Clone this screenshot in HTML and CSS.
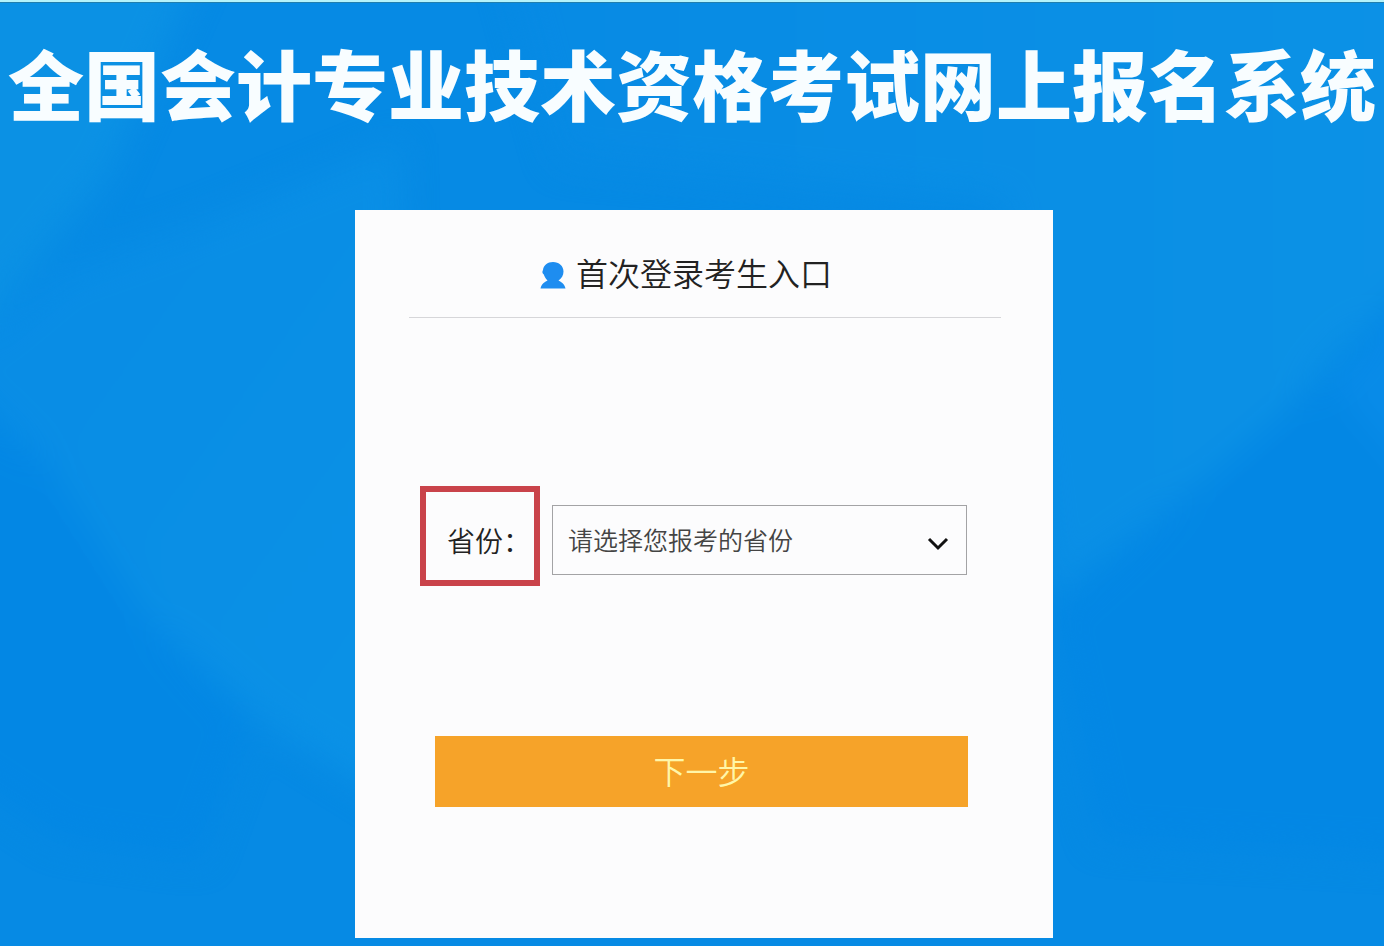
FILE: index.html
```
<!DOCTYPE html>
<html lang="zh-CN">
<head>
    <meta charset="UTF-8">
    <meta name="viewport" content="width=device-width, initial-scale=1.0">
    <title>全国会计专业技术资格考试网上报名系统</title>
    <link rel="stylesheet" href="styles.css">
</head>
<body>
    <svg class="page-bg" viewBox="0 0 1384 946" preserveAspectRatio="none" aria-hidden="true">
        <defs>
            <filter id="soften" color-interpolation-filters="sRGB"><feGaussianBlur stdDeviation="16"/></filter>
            <linearGradient id="mid" x1="0" y1="0" x2="1" y2="1">
                <stop offset="0" stop-color="#088be5"/>
                <stop offset="1" stop-color="#0b92e6"/>
            </linearGradient>
            <linearGradient id="top" x1="0" y1="0" x2="1" y2="0">
                <stop offset="0" stop-color="#078ae4"/>
                <stop offset="1" stop-color="#0c92e6"/>
            </linearGradient>
        </defs>
        <g filter="url(#soften)">
            <polygon fill="#0b91e4" points="-60,-60 210,-60 110,170 -60,380"/>
            <polygon fill="url(#mid)" points="-60,370 60,270 200,220 400,140 420,820 260,720 150,620 50,465 -60,370"/>
            <polygon fill="#0387e4" points="-60,380 50,465 150,620 250,720 200,860 60,840 -60,760"/>
            <polygon fill="url(#top)" points="500,-60 1450,-60 1450,250 1340,350 1300,395 1190,490 1050,600 1000,200 560,160"/>
            <polygon fill="#0387e4" points="1450,230 1340,360 1300,395 1190,490 1050,610 1100,840 1450,860"/>
            <polygon fill="#088be8" points="1330,380 1450,280 1450,520"/>
        </g>
    </svg>

    <header class="page-header">
        <h1>全国会计专业技术资格考试网上报名系统</h1>
    </header>

    <main class="page-main">
        <form class="login-card">
            <h2 class="card-title">
                <svg class="user-icon" viewBox="0 0 26 28" aria-hidden="true">
                    <path d="M13 1C19 1 23.500 5 23.500 10.500C23.500 14.500 21.500 17.500 18.500 19.500C20.500 21 24.500 22 25.500 27.500H0.500C1.500 22 5.500 21 7.500 19.500C5.500 17.500 4.500 15.500 3.800 13.500C2.200 12.500 2 10.500 3 9C3.500 4.500 7.500 1 13 1Z"/>
                </svg>
                首次登录考生入口
            </h2>

            <div class="form-row">
                <label class="province-label" for="province">省份：</label>
                <div class="select-wrap">
                    <select class="province-select" id="province">
                        <option>请选择您报考的省份</option>
                    </select>
                    <svg class="select-arrow" viewBox="0 0 22 14" aria-hidden="true">
                        <path d="M2 2L11 11L20 2"/>
                    </svg>
                </div>
            </div>

            <button type="button" class="next-btn">下一步</button>
        </form>
    </main>
</body>
</html>
```
FILE: styles.css
```
* {
    box-sizing: border-box;
}
body {
    margin: 0;
    min-height: 100vh;
    background: #068ae4;
    border-top: 2px solid #b4f3fb;
    font-family: "Noto Sans CJK SC", sans-serif;
    overflow-x: hidden;
}
.page-bg {
    position: absolute;
    top: 2px;
    left: 0;
    width: 100%;
    height: calc(100% - 2px);
    z-index: -1;
    border-top: 1px solid #217fae;
}
.page-header {
    padding: 28px 0 0;
    text-align: center;
}
.page-header h1 {
    margin: 0;
    color: #f8fdff;
    font-size: 76px;
    font-weight: 900;
    line-height: 104px;
    white-space: nowrap;
}
.page-main {
    display: flex;
    justify-content: center;
    padding: 76px 0 8px 24px;
}
.login-card {
    width: 698px;
    padding: 38px 52px 131px 54px;
    background: #fcfcfd;
}
.card-title {
    display: flex;
    align-items: center;
    justify-content: center;
    gap: 10px;
    margin: 0;
    padding: 0 38px 21px 0;
    border-bottom: 1px solid #d6d6d9;
    color: #222;
    font-size: 32px;
    font-weight: 350;
    line-height: 48px;
}
.user-icon {
    width: 26px;
    height: 28px;
    margin-top: 6px;
    fill: #1e8df0;
}
.form-row {
    display: flex;
    align-items: center;
    gap: 12px;
    margin: 168px 34px 150px 11px;
}
.province-label {
    width: 120px;
    height: 100px;
    padding: 8px 0 0 21px;
    border: 6px solid #c9434a;
    color: #222;
    font-size: 28px;
    font-weight: 350;
    line-height: 80px;
    white-space: nowrap;
}
.select-wrap {
    position: relative;
    flex: 1;
    margin-top: 8px;
}
.province-select {
    display: block;
    width: 100%;
    height: 70px;
    padding: 0 48px 2px 15px;
    border: 1px solid #a3a3a5;
    border-radius: 0;
    background: transparent;
    color: #444;
    font-family: inherit;
    font-size: 25px;
    font-weight: 350;
    appearance: none;
}
.select-arrow {
    position: absolute;
    top: 32px;
    right: 18px;
    width: 22px;
    height: 14px;
    fill: none;
    stroke: #111;
    stroke-width: 3;
    pointer-events: none;
}
.next-btn {
    display: block;
    width: 533px;
    height: 71px;
    margin-left: 26px;
    padding: 0 0 4px;
    border: none;
    background: #f6a329;
    color: #fff6a8;
    font-family: inherit;
    font-size: 32px;
    font-weight: 350;
    cursor: pointer;
}
.next-btn:hover {
    background: #ec9818;
}
```
